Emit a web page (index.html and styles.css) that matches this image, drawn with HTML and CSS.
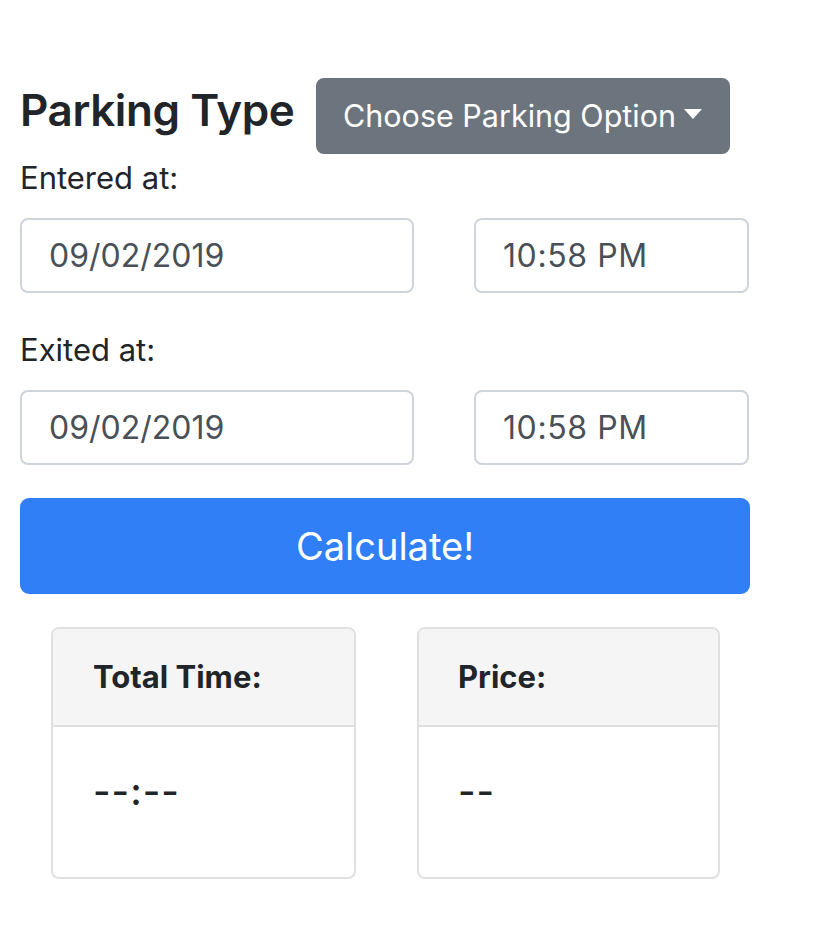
FILE: index.html
```html
<!DOCTYPE html>
<html>
<head>
<meta charset="utf-8">
<link rel="stylesheet" href="styles.css">
</head>
<body>
<div class="page">
  <div class="header-row">
    <h2 class="title">Parking Type</h2>
    <button class="btn btn-secondary dropdown">Choose Parking Option<span class="caret"></span></button>
  </div>
  <div class="form-group">
    <label class="label">Entered at:</label>
    <div class="input-row">
      <div class="input date">09/02/2019</div>
      <div class="input time">10:58 PM</div>
    </div>
  </div>
  <div class="form-group">
    <label class="label">Exited at:</label>
    <div class="input-row">
      <div class="input date">09/02/2019</div>
      <div class="input time">10:58 PM</div>
    </div>
  </div>
  <button class="btn btn-primary calc">Calculate!</button>
  <div class="cards">
    <div class="card card-time">
      <div class="card-header">Total Time:</div>
      <div class="card-body"><div class="value">--:--</div></div>
    </div>
    <div class="card card-price">
      <div class="card-header">Price:</div>
      <div class="card-body"><div class="value">--</div></div>
    </div>
  </div>
</div>
</body>
</html>
```
FILE: styles.css
```css
* { box-sizing: border-box; }
html, body { margin: 0; padding: 0; background: #fff; }
body {
  font-family: Inter, "Liberation Sans", Arial, sans-serif;
  color: #212529;
  font-size: 32px;
  line-height: 1.5;
}
.page {
  padding: 78px 0 0 20px;
  width: 749px;
}
.header-row {
  display: flex;
  align-items: flex-start;
  height: 76px;
}
.title {
  margin: 0;
  font-size: 44px;
  font-weight: 600;
  line-height: 1.2;
  letter-spacing: -0.4px;
  padding-top: 6px;
  width: 296px;
}
.btn {
  font-family: inherit;
  border: 2px solid transparent;
  border-radius: 8px;
  color: #fff;
  cursor: pointer;
}
.dropdown {
  background: #6c757d;
  border-color: #6c757d;
  font-size: 30.5px;
  line-height: 48px;
  padding: 12px 24px 12px 25px;
  height: 76px;
  width: 414px;
  display: flex;
  align-items: center;
  white-space: nowrap;
}
.caret {
  display: inline-block;
  margin-left: 8px;
  width: 0;
  height: 0;
  border-top: 10px solid #fff;
  border-left: 9px solid transparent;
  border-right: 9px solid transparent;
  margin-top: -4px;
}
.form-group {
  margin-bottom: 33px;
}
.label {
  display: block;
  font-size: 31px;
  line-height: 48px;
  margin-bottom: 16px;
}
.input-row {
  display: flex;
  justify-content: space-between;
}
.input {
  height: 75px;
  border: 2px solid #ced4da;
  border-radius: 8px;
  color: #495057;
  font-size: 32px;
  line-height: 71px;
  padding: 0 27px;
  background: #fff;
}
.input.date { width: 394px; }
.input.time { width: 275px; letter-spacing: 0.6px; }
.calc {
  display: block;
  width: 730px;
  height: 96px;
  background: #307ff6;
  border-color: #307ff6;
  border-radius: 9px;
  font-size: 38px;
  line-height: 1.5;
  padding: 0;
  margin-top: 0;
}
.cards {
  display: flex;
  padding-left: 31px;
  margin-top: 33px;
}
.card {
  border: 2px solid #e0e0e0;
  border-radius: 8px;
  overflow: hidden;
  height: 252px;
  display: flex;
  flex-direction: column;
}
.card-time { width: 305px; }
.card-price { width: 303px; margin-left: 61px; }
.card-header {
  background: #f5f5f5;
  border-bottom: 2px solid #e0e0e0;
  height: 98px;
  padding: 0 40px;
  font-weight: 700;
  font-size: 31px;
  line-height: 96px;
}
.card-price .card-header { padding-left: 39px; }
.card-body {
  padding: 38px 40px;
  flex: 1;
}
.card-price .card-body { padding-left: 39px; }
.value {
  font-size: 38px;
  font-weight: 500;
  line-height: 52px;
  letter-spacing: 1px;
}
```
